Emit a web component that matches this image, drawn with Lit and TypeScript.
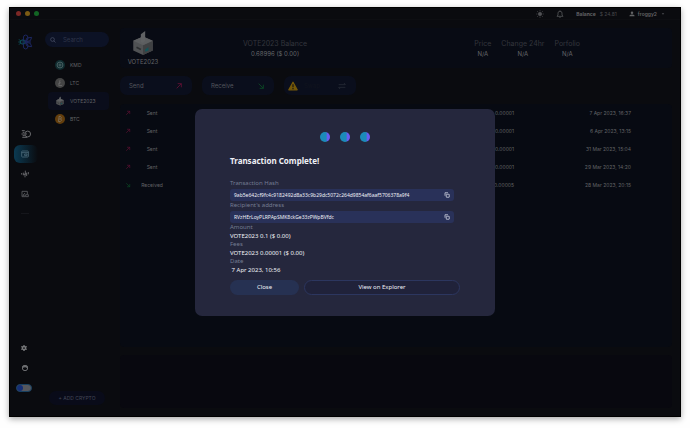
import { LitElement, html, svg, css } from "lit";
import { customElement, state } from "lit/decorators.js";

interface Tx { kind: string; amount: string; date: string; }

const txs: Tx[] = [
  { kind: "Sent", amount: "0.00001", date: "7 Apr 2023, 16:37" },
  { kind: "Sent", amount: "0.00001", date: "6 Apr 2023, 13:15" },
  { kind: "Sent", amount: "0.00001", date: "31 Mar 2023, 15:04" },
  { kind: "Sent", amount: "0.00001", date: "29 Mar 2023, 14:20" },
  { kind: "Received", amount: "0.00005", date: "28 Mar 2023, 20:15" },
];

const icons = {
  logo: svg`<g fill="none" stroke-width="1.500"><g stroke="#1c2660">
    <ellipse cx="13" cy="6" rx="3.500" ry="4.500"/><ellipse cx="13" cy="18" rx="3.500" ry="4.500"/>
    <path d="M12 12 15 6 22 5 20 10ZM12 12 20 14 22 19 15 18ZM9 8 14 12 9 16ZM14 12H21"/></g>
    <g stroke="#0c4d58"><circle cx="8" cy="12" r="3"/><path d="M3 8 6 11M3 16 6 13M2 12H5"/></g></g>`,
  cube: svg`
    <path d="M12 6 21 10V19L12 23 3 19V10Z" fill="#505254"/>
    <path d="M12 14 21 10V19L12 23Z" fill="#3f4143"/>
    <path d="M12 14 3 10 12 6 21 10Z" fill="#5c5e60"/>
    <path d="M10 11V4L14 1V10L12 12Z" fill="#606264"/>
    <path d="M6 16 10 18" stroke="#2c2e30" stroke-width="1.500"/>
    <path d="M14 18 17 16V19L14 20Z" fill="#12555a"/>`,
  search: svg`<g fill="none" stroke="#4a5168" stroke-width="2.800"><circle cx="10" cy="10" r="7.500"/><path d="m15 15 7 7"/></g>`,
  kmd: svg`<circle cx="12" cy="12" r="12" fill="#102c30"/><g fill="none" stroke="#53696b" stroke-width="2"><circle cx="12" cy="12" r="7"/><circle cx="12" cy="12" r="2.500"/></g>`,
  ltc: svg`<circle cx="12" cy="12" r="12" fill="#454545"/><path d="M12 5 9 18H17M8 14 14 11" fill="none" stroke="#696969" stroke-width="2"/>`,
  btc: svg`<circle cx="12" cy="12" r="12" fill="#633e0c"/><path d="M9 6H13Q17 7 14 12 18 15 13 18H8M10 6 8 18M9 12H14M12 4V6M11 18V20" fill="none" stroke="#7d7263" stroke-width="1.800"/>`,
  up: svg`<path d="M5 19 19 5M8 5H19V16" fill="none" stroke="#681136" stroke-width="2.400"/>`,
  down: svg`<path d="M5 5 19 19M8 19H19V8" fill="none" stroke="#0b4f26" stroke-width="2.400"/>`,
  swap: svg`<path d="M2 8H22L18 3M22 16H2L6 21" fill="none" stroke="#2b2f3a" stroke-width="2.200"/>`,
  warn: svg`<path d="M12 3 22 21H2Z" fill="#755808" stroke="#755808" stroke-width="3" stroke-linejoin="round"/><path d="M12 8V15M12 17V20" stroke="#0c0d14" stroke-width="2.600"/>`,
  sun: svg`<circle cx="12" cy="12" r="6" fill="#505154"/><path d="M12 1V4M12 20V23M1 12H4M20 12H23M4 4 6 6M18 18 20 20M20 4 18 6M6 18 4 20" stroke="#505154" stroke-width="2.400"/>`,
  bell: svg`<path d="M3 19H21L18 15V9Q18 4 12 4T6 9V15ZM10 22H14M12 1V4" fill="none" stroke="#505154" stroke-width="2.600"/>`,
  user: svg`<circle cx="12" cy="7" r="5" fill="#626365"/><path d="M2 21V18Q4 14 12 14T22 18V21Z" fill="#626365"/>`,
  caret: svg`<path d="M7 9H17L12 15Z" fill="#505154"/>`,
  portfolio: svg`<g fill="none" stroke="#66676a" stroke-width="2.400"><circle cx="16" cy="12" r="7"/><path d="M2 4H9M3 20H15M1 12H7M4 8H8M4 16H9M12 9V14"/></g>`,
  wallet: svg`<g fill="none" stroke="#496878" stroke-width="2.600"><rect x="2" y="3" width="20" height="18" rx="2"/><path d="M2 8H22M11 12H18V17H11Z"/></g>`,
  dex: svg`<path d="M2 9V14M7 8V16M12 11V22M13 2V13M17 8V18M22 6V13M7 13H12M12 12H17" fill="none" stroke="#66676a" stroke-width="2.800"/>`,
  book: svg`<path d="M19 12V4H3V20H13M6 16 12 9M14 14H22V20H14ZM5 16H11" fill="none" stroke="#5c5d60" stroke-width="2.600"/>`,
  gear: svg`<path d="M12 4V0M12 20V24M5 8 1 6M19 8 23 6M5 16 1 18M19 16 23 18" stroke="#77787a" stroke-width="5"/><circle cx="12" cy="12" r="6.500" fill="none" stroke="#77787a" stroke-width="6"/>`,
  help: svg`<circle cx="12" cy="12" r="8" fill="none" stroke="#6b6c6f" stroke-width="3"/><path d="M4 10Q9 13 12 9 15 12 20 12V6L12 3 4 6Z" fill="#6b6c6f"/>`,
  copy: svg`<path d="M4 15V3H16" fill="none" stroke="#d6d9e6" stroke-width="3"/><rect x="9" y="9" width="12" height="12" rx="1" fill="none" stroke="#d6d9e6" stroke-width="3"/>`,
};

const icon = (name: keyof typeof icons, size = "s8") =>
  html`<svg class="icon ${size}" viewBox="0 0 24 24" aria-hidden="true">${icons[name]}</svg>`;

@customElement("app-root")
export class AppRoot extends LitElement {
  @state() private open = true;

  static styles = css`
    :host { box-sizing: border-box; min-height: 100vh; padding: 7px 9px 11px; background: #fefefe; display: flex; font: 5px/8px Inter, sans-serif; color: #626366; }
    * { box-sizing: border-box; }
    button, input { font: inherit; color: inherit; border: 0; background: none; padding: 0; margin: 0; }
    button { cursor: pointer; }
    h1, h2, p, dl, dd { margin: 0; font: inherit; }
    .icon { display: block; flex: none; }
    .s6 { width: 6px; height: 6px; } .s8 { width: 8px; height: 8px; } .s10 { width: 10px; height: 10px; } .s16 { width: 16px; height: 16px; } .s26 { width: 26px; height: 26px; }
    .window { position: relative; flex: 1; min-width: 0; display: flex; flex-direction: column; background: #0a0b0f; border: 1px solid #000; box-shadow: 0 2px 6px #0005; }
    .titlebar { display: flex; align-items: center; height: 12px; padding: 0 14px 0 6px; border-bottom: 1px solid #0d0e12; }
    .lights { display: flex; gap: 4px; flex: 1; }
    .light { width: 5px; height: 5px; border-radius: 50%; }
    .red { background: #7c2826; } .amber { background: #7c5b14; } .green { background: #126524; }
    .status { display: flex; align-items: center; gap: 12px; }
    .money { display: flex; gap: 4px; font-weight: 700; }
    .money span { font-weight: 400; color: #47484c; }
    .user { display: flex; align-items: center; gap: 3px; font-weight: 600; }
    .body { flex: 1; display: flex; }
    .rail { width: 32px; display: flex; flex-direction: column; justify-content: space-between; padding: 14px 0 24px 4px; }
    .group { display: flex; flex-direction: column; }
    .logo { padding-left: 3px; height: 90px; }
    .item { height: 20px; width: 24px; display: flex; align-items: center; padding-left: 7px; }
    .active { border-radius: 6px; height: 18px; margin: 1px 0; background: linear-gradient(90deg, #0b3a52, #0a0b0f); }
    .more { width: 8px; height: 1px; margin: 9px 0 0 7px; background: #15161b; }
    .switch { appearance: none; width: 16px; height: 8px; border-radius: 4px; background: #55575d; border: 1px solid #184060; margin: 6px 0 0 2px; display: flex; }
    .switch::before { content: ""; width: 6px; height: 6px; border-radius: 50%; background: #152f75; }
    .coins { width: 66px; display: flex; flex-direction: column; margin-left: 3px; padding: 12px 2px 11px 0; }
    .search { display: flex; align-items: center; gap: 7px; height: 15px; border-radius: 8px; background: #0c1225; padding: 0 5px; font-size: 6px; }
    .search input { width: 100%; min-width: 0; outline: 0; }
    .search input::placeholder { color: #30364a; }
    .coinlist { display: flex; flex-direction: column; margin: 9px 0 0 3px; flex: 1; }
    .coin { display: flex; align-items: center; gap: 5px; height: 18px; padding-left: 7px; border-radius: 4px; }
    .selected { background: #0a0d1b; }
    .add { align-self: center; width: 56px; height: 14px; border-radius: 7px; background: #090b19; color: #434758; }
    .main { flex: 1; min-width: 0; display: flex; flex-direction: column; padding: 8px 8px 8px 9px; }
    .summary { display: flex; align-items: center; height: 40px; background: #080b14; border-radius: 4px; }
    .asset { width: 46px; display: flex; flex-direction: column; align-items: center; gap: 2px; font-size: 6px; }
    .balance { flex: 1; max-width: 218px; text-align: center; }
    .head { font-size: 7px; line-height: 10px; color: #34363d; }
    .val { font-size: 6px; line-height: 9px; color: #66676b; }
    .stats { display: flex; gap: 10px; margin: 0 92px 0 auto; text-align: center; }
    .actions { display: flex; gap: 10px; margin: 8px 0 9px; }
    .action { display: flex; align-items: center; justify-content: space-between; width: 72px; height: 19px; border-radius: 7px; background: #0a0e1c; padding: 0 9px; font-size: 6px; color: #54565d; }
    .swap { padding: 0 10px 0 4px; color: #10131d; }
    .swap span { flex: 1; text-align: left; padding-left: 6px; }
    .history { flex: 1; background: #070a12; border-radius: 4px; }
    table { width: 100%; border-collapse: collapse; }
    td { padding: 0; height: 18px; }
    .dir { width: 12px; padding-left: 5px; }
    .kind { width: 38px; padding-left: 2px; text-align: center; }
    .amount { text-align: right; }
    .date { width: 158px; text-align: right; padding-right: 41px; }
    .chart { height: 53px; background: #08080f; margin-top: 8px; border-radius: 4px; }
    .veil { position: absolute; inset: 0; display: flex; align-items: center; justify-content: center; }
    .modal { width: 300px; max-width: 90%; border-radius: 7px; background: #25273d; padding: 23px 35px 21px; font-family: "Noto Sans", sans-serif; font-size: 6px; color: #eff0f6; }
    .dots { display: flex; gap: 10px; justify-content: center; margin-bottom: 13px; }
    .dot { width: 10px; height: 10px; border-radius: 50%; background: linear-gradient(90deg, #1b8bb9 60%, #685df0 75%); }
    .title { font-size: 8px; line-height: 12px; font-weight: 700; margin-bottom: 12px; }
    .label { color: #747c92; line-height: 9px; }
    .value { line-height: 8px; }
    .box { display: flex; align-items: center; justify-content: space-between; height: 12px; margin: 1px 6px 0 0; padding: 0 4px; border-radius: 3px; background: #293159; font-size: 5px; white-space: nowrap; }
    .buttons { display: flex; gap: 5px; margin-top: 6px; }
    .close { width: 69px; height: 15px; border-radius: 8px; background: #263152; }
    .explore { flex: 1; height: 15px; border-radius: 8px; border: 1px solid #2c365f; background: #20223a; color: inherit; text-decoration: none; text-align: center; line-height: 13px; }
  `;

  render() {
    return html`<div class="window">
      <header class="titlebar">
        <div class="lights"><i class="light red"></i><i class="light amber"></i><i class="light green"></i></div>
        <div class="status">
          <button aria-label="Theme">${icon("sun")}</button>
          <button aria-label="Notifications">${icon("bell")}</button>
          <div class="money">Balance <span>$ 24.81</span></div>
          <button class="user">${icon("user", "s6")} froggy2 ${icon("caret", "s6")}</button>
        </div>
      </header>
      <div class="body">
        <nav class="rail">
          <div class="group">
            <div class="logo">${icon("logo", "s16")}</div>
            <button class="item" aria-label="Portfolio">${icon("portfolio", "s10")}</button>
            <button class="item active" aria-label="Wallet">${icon("wallet")}</button>
            <button class="item" aria-label="DEX">${icon("dex")}</button>
            <button class="item" aria-label="Addresses">${icon("book")}</button>
            <i class="more"></i>
          </div>
          <div class="group">
            <button class="item" aria-label="Settings">${icon("gear", "s6")}</button>
            <button class="item" aria-label="Support">${icon("help", "s8")}</button>
            <input class="switch" type="checkbox" aria-label="Privacy">
          </div>
        </nav>
        <aside class="coins">
          <label class="search">${icon("search", "s6")}<input type="text" placeholder="Search" aria-label="Search"></label>
          <div class="coinlist">
            <button class="coin">${icon("kmd", "s10")}KMD</button>
            <button class="coin">${icon("ltc", "s10")}LTC</button>
            <button class="coin selected">${icon("cube", "s10")}VOTE2023</button>
            <button class="coin">${icon("btc", "s10")}BTC</button>
          </div>
          <button class="add">+ ADD CRYPTO</button>
        </aside>
        <main class="main">
          <section class="summary">
            <div class="asset">${icon("cube", "s26")}VOTE2023</div>
            <div class="balance"><p class="head">VOTE2023 Balance</p><p class="val">0.68996 ($ 0.00)</p></div>
            <div class="stats">
              ${["Price", "Change 24hr", "Porfolio"].map((h) => html`<div><p class="head">${h}</p><p class="val">N/A</p></div>`)}
            </div>
          </section>
          <div class="actions">
            <button class="action">Send ${icon("up")}</button>
            <button class="action">Receive ${icon("down")}</button>
            <button class="action swap">${icon("warn", "s10")}<span>Swap</span>${icon("swap")}</button>
          </div>
          <section class="history"><table><tbody>
            ${txs.map((t) => html`<tr>
              <td class="dir">${icon(t.kind === "Sent" ? "up" : "down", "s6")}</td>
              <td class="kind">${t.kind}</td>
              <td class="amount">${t.amount}</td>
              <td class="date">${t.date}</td>
            </tr>`)}
          </tbody></table></section>
          <section class="chart"></section>
        </main>
      </div>
      ${this.open ? html`<div class="veil"><section class="modal" role="dialog" aria-labelledby="title">
        <div class="dots"><i class="dot"></i><i class="dot"></i><i class="dot"></i></div>
        <h1 class="title" id="title">Transaction Complete!</h1>
        <dl>
          <dt class="label">Transaction Hash</dt>
          <dd class="box">9ab5e642cf9fc4c9182492d8a33c9b29dc5072c264d9854af6aaf5706378a9f4<button aria-label="Copy hash">${icon("copy", "s6")}</button></dd>
          <dt class="label">Recipient's address</dt>
          <dd class="box">RVzHErLoyPLRPApSMK8ckGe33zPWpBVfdc<button aria-label="Copy address">${icon("copy", "s6")}</button></dd>
          <dt class="label">Amount</dt><dd class="value">VOTE2023 0.1 ($ 0.00)</dd>
          <dt class="label">Fees</dt><dd class="value">VOTE2023 0.00001 ($ 0.00)</dd>
          <dt class="label">Date</dt><dd class="value">&nbsp;7 Apr 2023, 10:56</dd>
        </dl>
        <div class="buttons">
          <button class="close" @click=${() => (this.open = false)}>Close</button>
          <a class="explore" href="#">View on Explorer</a>
        </div>
      </section></div>` : ""}
    </div>`;
  }
}
